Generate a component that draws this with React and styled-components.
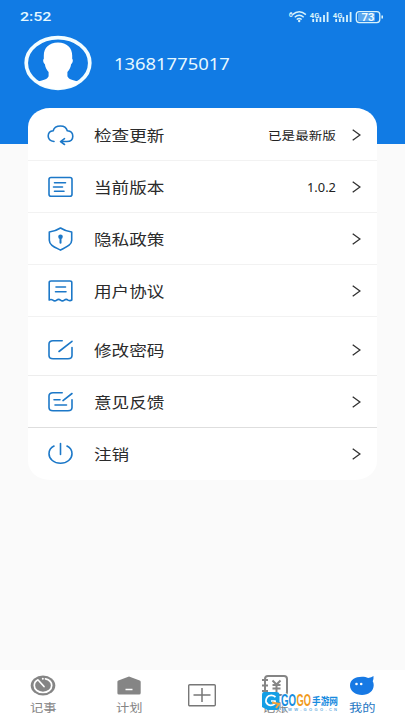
import React from "react";
import styled, { createGlobalStyle } from "styled-components";

const BLUE = "#117be4";
const ICON = "#1c78c8";

const Global = createGlobalStyle`
  * { box-sizing: border-box; }
  body { margin: 0; font-family: "Noto Sans", "Noto Sans CJK SC", sans-serif; }
`;
const Page = styled.div`
  display: flex; flex-direction: column;
  width: 405px; height: 720px; overflow: hidden;
  background: #fafafa;
`;
const Header = styled.header`
  flex: none; height: 144px; background: ${BLUE}; color: #e6f8ff;
`;
const StatusBar = styled.div`
  display: flex; align-items: center; justify-content: space-between;
  height: 32px; padding: 1px 21px 0 20px;
`;
const Wide = styled.span`
  display: block; width: ${(p) => p.$w}px; white-space: nowrap;
  > span {
    display: inline-block; transform: scaleX(${(p) => p.$s || 1.15}); transform-origin: left center;
  }
`;
const Clock = styled(Wide)`font: 500 13.3px/18px Roboto, sans-serif;`;
const Profile = styled.div`
  display: flex; align-items: center; height: 62px; padding-left: 24px; gap: 22px;
`;
const Phone = styled(Wide)`font: 400 16px/22px "Noto Sans", sans-serif; padding-top: 1px;`;
const Card = styled.main`
  flex: none; width: 349px; height: 372px; margin: -36px 0 0 28px; padding-top: 1px;
  background: #fff; border-radius: 22px / 19px; overflow: hidden;
`;
const Row = styled.div`
  display: flex; align-items: center; height: 52px;
  padding: 0 16px 0 19px;
  border-bottom: 1px solid ${(p) => p.$line || "#f2f2f2"};
  margin-bottom: ${(p) => p.$gap || 0}px;
`;
const Label = styled(Wide)`
  flex: 1; margin-left: 20px; color: #2b2b2b; font-size: 15.3px; line-height: 22px;
`;
const Value = styled(Wide)`
  color: #222; font-size: 11.8px; line-height: 18px; margin-right: 16px;
`;
const Nav = styled.nav`
  display: flex; height: 50px; margin-top: auto; background: #fff;
`;
const Tab = styled.div`
  display: flex; flex-direction: column; align-items: center;
  width: ${(p) => p.$w}px; padding-top: ${(p) => p.$top || 5}px;
  color: ${(p) => (p.$active ? "#2778c4" : "#858585")};
`;
const TabText = styled(Wide)`font-size: 11.5px; line-height: 16px; margin-top: 4px;`;
const NotesTab = styled(Tab)`position: relative;`;
const Mark = styled.div`
  position: absolute; left: 29px; top: 21px; width: 80px; height: 22px;
`;

const Stretch = ({ as: C = Wide, w, s, children }) => (
  <C $w={w} $s={s}><span>{children}</span></C>
);

const icons = {
  cloud: <path d="M7 17.5C3 17 1.2 14.8 1.2 12c0-3 2.3-5 5-5.3C7 3.6 10 2 13.5 2s6 2 6.8 4.8c3.4.3 5.5 2.6 5.5 5.4 0 3.4-2.6 5.3-6 5.3h-5.5M17.5 14.7l-4 2.9 4 2.9" />,
  doc: <><rect x="2" y="1.5" width="23" height="18.8" rx="2" /><path d="M7.5 6.7h11M6.5 11h9M7.5 15.2h9.5" /></>,
  shield: <><path d="M13.5 0 Q18 3 24.7 4V12.2c0 5-5.8 7-11.2 9.9C8 19.2 2.3 17.2 2.3 12.2V4Q9 3 13.5 0Z" /><circle cx="13.5" cy="8.8" r="2.3" fill={ICON} stroke="none" /><path d="M13.5 10v4.8" strokeWidth="2" /></>,
  receipt: <><path d="M2.2 20V2.5Q2.2 1 4 1h19Q24.8 1 24.8 2.5V20q-1.7 1.2-3.8.1-1.8-1.5-3.7 0-1.9 1.6-3.8 0-1.9-1.6-3.8 0-1.9 1.6-3.8 0-1.8-1.2-3.7-.1Z" /><path d="M9 7h9.5M8.5 11.8h10.5" /></>,
  edit: <path d="M15.2 1.8H6Q2 1.8 2 5.1v11.4Q2 19.8 6 19.8h15q4 0 4-3.3V8.5M12 12.5 25 2.3" />,
  feedback: <path d="M15.2 1.8H6Q2 1.8 2 5.1v11.4Q2 19.8 6 19.8h15q4 0 4-3.3V8.8M16 9.6 25 2.5M7 8.7h6M8 14h11.5" />,
  power: <path d="M13.5.5v11M7 3C3.7 4.6 2 7.5 2 10.7 2 16 7 20.3 13.5 20.3S25 16 25 10.7C25 7.5 23.3 4.6 20 3" />,
};
const LineIcon = ({ name }) => (
  <svg width="27" height="24" viewBox="0 -1 27 24" fill="none" stroke={ICON} strokeWidth="1.6" strokeLinecap="round" strokeLinejoin="round">{icons[name]}</svg>
);
const Chevron = () => (
  <svg width="9" height="12" viewBox="0 0 9 12" fill="none" stroke="#333" strokeWidth="1.3"><path d="m.7.7 7.2 5.3-7.2 5.3" /></svg>
);
const rows = [
  { icon: "cloud", text: "检查更新", value: "已是最新版", vw: 68 },
  { icon: "doc", text: "当前版本", value: "1.0.2", vw: 29, vs: 1.09 },
  { icon: "shield", text: "隐私政策" },
  { icon: "receipt", text: "用户协议", gap: 7 },
  { icon: "edit", text: "修改密码", line: "#ededed" },
  { icon: "feedback", text: "意见反馈", line: "#dedede" },
  { icon: "power", text: "注销", line: "transparent" },
];

const StatusIcons = () => (
  <svg width="96" height="16" viewBox="288 8 96 16" fill="none" stroke="#d8f2fb" fontFamily="Roboto, sans-serif">
    <text x="288.7" y="16" fontSize="7" fontWeight="700" fill="#d8f2fb" stroke="none">6</text>
    <g strokeWidth="1.5"><path d="M292.5 13.6q6.7-5.6 13.4 0M294.7 16.2q4.5-3.8 9 0M296.7 18.5q2.5-2 5 0" /></g>
    <circle cx="299.2" cy="20" r="1.2" fill="#d8f2fb" stroke="none" />
    {[0, 23].map((x) => (
      <g key={x} transform={`translate(${x} 0)`}>
        <text x="309.8" y="16.5" fontSize="8" fontWeight="700" textLength="9.5" lengthAdjust="spacingAndGlyphs" fill="#d8f2fb" stroke="none">4G</text>
        <path strokeWidth="1.8" d="M313.2 18v3M316.8 17.5V21M320.4 16v5M324 14v7M327.6 11v10" />
      </g>
    ))}
    <rect x="356.3" y="10.6" width="23.5" height="11" rx="3" strokeWidth="1.3" />
    <rect x="358" y="12" width="17" height="8.2" rx="1" fill="#5ba7ee" stroke="none" />
    <path d="M382.2 14.5v3" strokeWidth="1.6" />
    <text x="361.5" y="20" fontSize="10.5" fontWeight="600" textLength="13" lengthAdjust="spacingAndGlyphs" fill="#f2fdff" stroke="none">73</text>
  </svg>
);
const Avatar = () => (
  <svg width="68" height="56" viewBox="0 0 68 56">
    <defs><clipPath id="face"><ellipse cx="34" cy="28" rx="32" ry="26" /></clipPath></defs>
    <ellipse cx="34" cy="28" rx="31.8" ry="25.3" fill="none" stroke="#f3fdff" strokeWidth="3.7" />
    <path clipPath="url(#face)" fill="#fff" d="M34 7.5c9 0 14.2 5.5 14.2 13v3.2c1.2.8.6 4.5-1 5.3-.7 4-2 6.2-3.8 8v4.3c1.3 3 5 4 10.6 5.3v10H14V46.6c5.6-1.3 9.3-2.3 10.6-5.3V37c-1.8-1.8-3.1-4-3.8-8-1.6-.8-2.2-4.5-1-5.3v-3.2c0-7.5 5.2-13 14.2-13Z" />
  </svg>
);
const Watermark = () => (
  <svg width="80" height="22" viewBox="0 0 80 22">
    <path d="M3 1h12.5q3 0 3 3v12q0 3-3 3H6.500L1 16V4q0-3 2-3Z" fill="#149fe5" />
    <path d="M14.500 6q-3-2.500-6.500-1.200Q4.500 7 5 11q2 4 6 3.200 4-1 3-4.200H10" fill="none" stroke="#fff" strokeWidth="1.7" />
    <path d="m11 11.500 7 1.500-3 4" fill="none" stroke="#f6a23a" strokeWidth="2" />
    <g fontFamily="Liberation Sans, sans-serif" fontWeight="700" fontSize="17" stroke="#fff" strokeWidth="2" paintOrder="stroke">
      <text x="20" y="15.300" textLength="15" lengthAdjust="spacingAndGlyphs" fill="#168de0">GO</text>
      <text x="35.500" y="15.300" textLength="14.500" lengthAdjust="spacingAndGlyphs" fill="#f19a20">GO</text>
    </g>
    <text x="51" y="13.500" fontFamily="Noto Sans CJK SC, sans-serif" fontWeight="700" fontSize="10.500" textLength="26" lengthAdjust="spacingAndGlyphs" fill="#178be0" stroke="#fff" strokeWidth="2" paintOrder="stroke">手游网</text>
    <text x="21" y="19.800" fontFamily="Liberation Sans, sans-serif" fontSize="4" fontWeight="700" textLength="55" fill="#6aaee0">WWW.GOGO.CN</text>
  </svg>
);

export default function App() {
  return (
    <Page>
      <Global />
      <Header>
        <StatusBar>
          <Stretch as={Clock} w={32} s={1.2}>2:52</Stretch>
          <StatusIcons />
        </StatusBar>
        <Profile>
          <Avatar />
          <Stretch as={Phone} w={116} s={1.15}>13681775017</Stretch>
        </Profile>
      </Header>
      <Card>
        {rows.map((r) => (
          <Row key={r.icon} $gap={r.gap} $line={r.line}>
            <LineIcon name={r.icon} />
            <Stretch as={Label} w={80}>{r.text}</Stretch>
            {r.value && <Stretch as={Value} w={r.vw} s={r.vs}>{r.value}</Stretch>}
            <Chevron />
          </Row>
        ))}
      </Card>
      <Nav>
        <Tab $w={86}>
          <svg width="26" height="21" viewBox="0 0 26 21"><ellipse cx="13" cy="10.5" rx="12.3" ry="10" fill="#858585" /><path d="M8 4.8C5.5 6 4.3 8 4.3 10.5c0 4 3.8 7 8.700 7s8.700-3 8.700-7c0-3.200-2.500-5.800-6.200-6.700M9 6l5 5.500" fill="none" stroke="#fff" strokeWidth="1.7" strokeLinecap="round" /><circle cx="12.8" cy="3.8" r="1" fill="#fff" /></svg>
          <Stretch as={TabText} w={26}>记事</Stretch>
        </Tab>
        <Tab $w={86}>
          <svg width="26" height="21" viewBox="0 0 26 21"><path d="m13 1.5 10.700 4q1 .4 1 1.500v11q0 1.500-1.600 1.500H3q-1.600 0-1.600-1.500V7q0-1.100 1-1.500Z" fill="#858585" /><path d="M9.500 14.500h7" stroke="#fff" strokeWidth="1.5" /></svg>
          <Stretch as={TabText} w={26}>计划</Stretch>
        </Tab>
        <Tab $w={60} $top={13}>
          <svg width="30" height="24" viewBox="0 0 30 24" fill="none" stroke="#777"><rect x="1.7" y="1.7" width="26.6" height="21" rx="1" strokeWidth="1.4" /><path d="M6.5 12h17M15 5v14" strokeWidth="1.5" /></svg>
        </Tab>
        <NotesTab $w={86}>
          <svg width="28" height="21" viewBox="0 0 28 21" fill="none" stroke="#858585" strokeWidth="2"><rect x="4" y="1" width="22" height="19" rx="3" /><path d="M1 5h6M1 10.500h6M1 16h6M11.500 5.500l4 4 4-4M15.500 9.500V17M11.500 10h8M11.500 13.500h8" /></svg>
          <Stretch as={TabText} w={26}>记账</Stretch>
          <Mark><Watermark /></Mark>
        </NotesTab>
        <Tab $w={87} $active>
          <svg width="26" height="21" viewBox="0 0 26 21"><path d="M24.500 1q.3 3-.8 5.200c.8 1.300 1 2.500 1 4C24.700 16 19.500 20 13 20S1 16 1 10.500 6 1.700 13 1.700c2.500 0 4.300.5 6.200 1.200Q22.500 2.800 24.500 1Z" fill="#1779e4" /><circle cx="7.5" cy="9" r="1.3" fill="#fff" /><circle cx="12.2" cy="9" r="1.3" fill="#fff" /></svg>
          <Stretch as={TabText} w={26}>我的</Stretch>
        </Tab>
      </Nav>
    </Page>
  );
}
